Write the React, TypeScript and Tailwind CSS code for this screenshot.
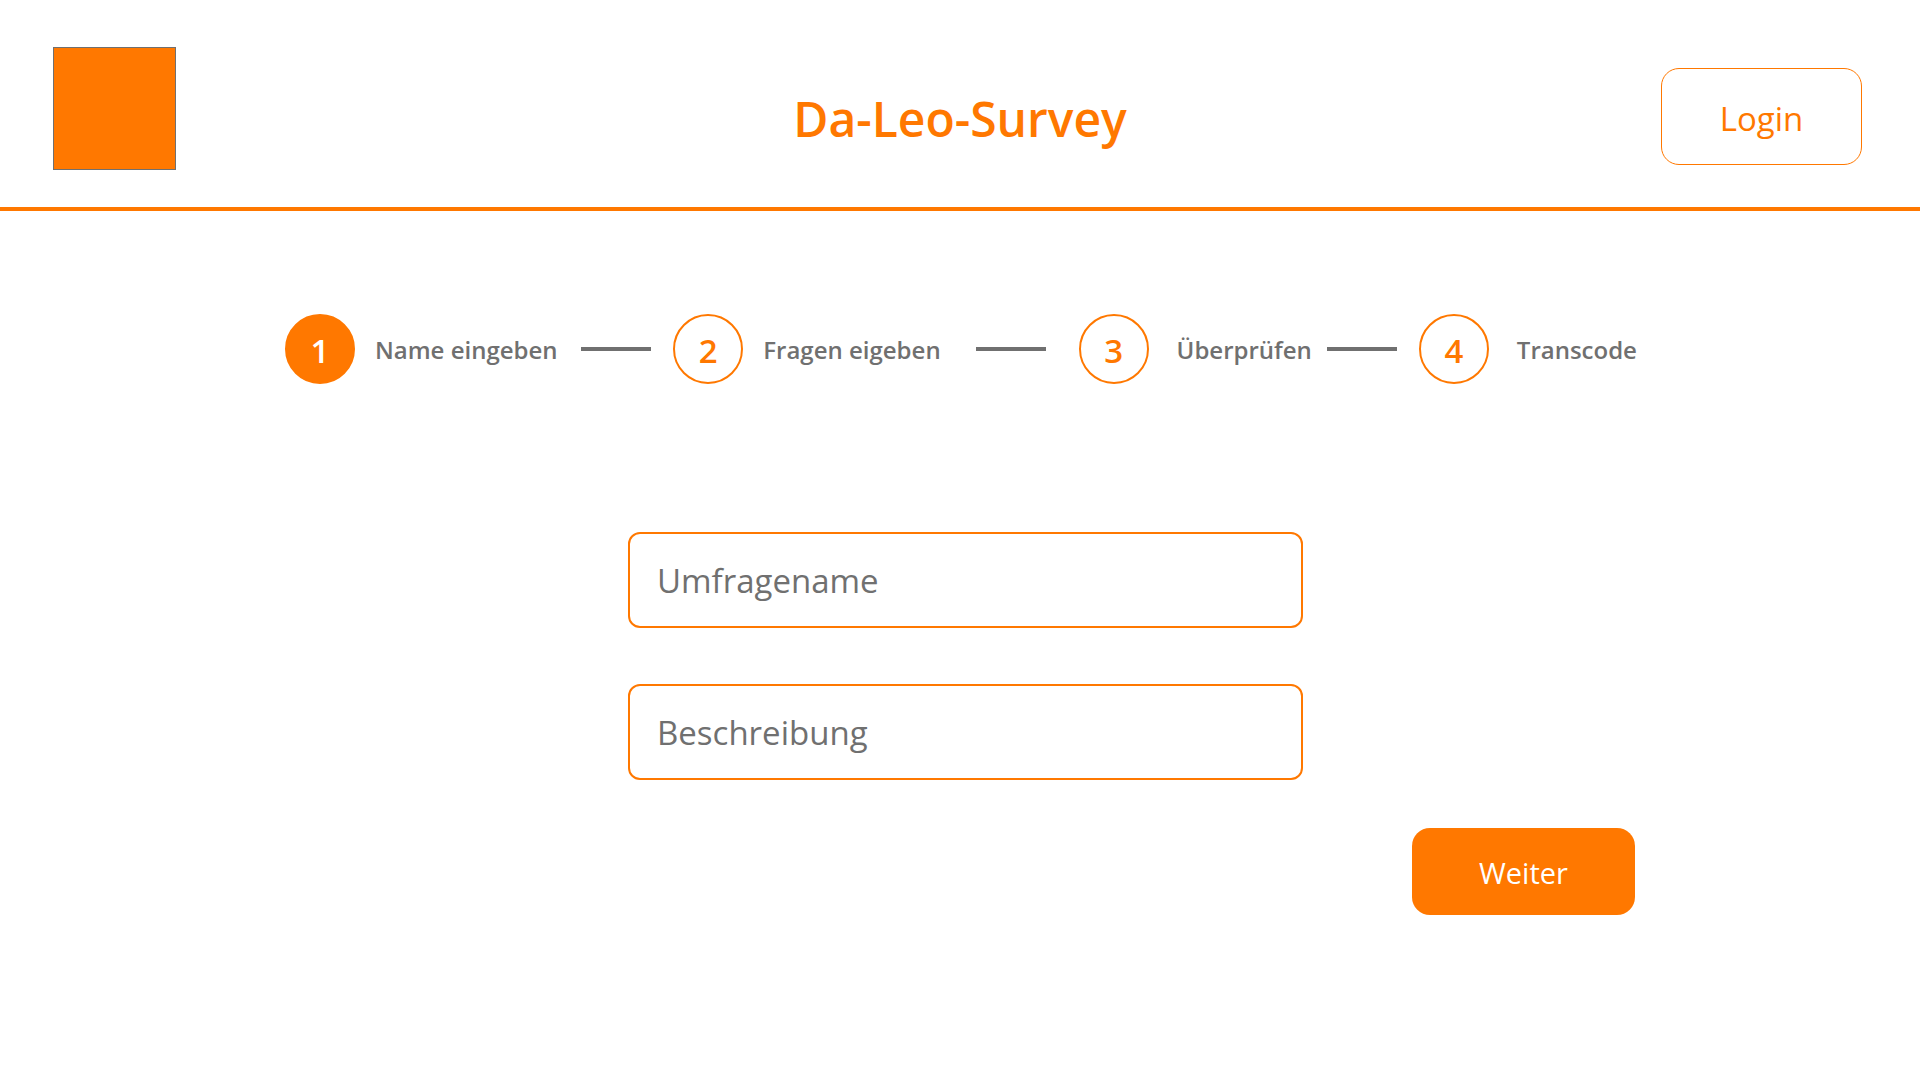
import { useState } from "react";

type Step = { label: string; gap: string; connector?: string };

const steps: Step[] = [
  { label: "Name eingeben", gap: "gap-5", connector: "mr-[22px]" },
  { label: "Fragen eigeben", gap: "gap-5", connector: "mr-[33px]" },
  { label: "Überprüfen", gap: "gap-7", connector: "mr-[22px]" },
  { label: "Transcode", gap: "gap-7" },
];

function Header() {
  return (
    <header className="grid grid-cols-[1fr_auto_1fr] items-center border-b-4 border-[#ff7800] px-[53px] pt-[47px] pb-[37px] text-[#ff7800]">
      <div className="size-[123px] border border-[#707070] bg-[#ff7800]" />
      <h1 className="mt-5 text-[48px] leading-[60px] font-semibold">Da-Leo-Survey</h1>
      <button
        type="button"
        className="mt-4 mr-[5px] h-[97px] w-[201px] justify-self-end rounded-[18px] border border-[#ff7800] pt-1 text-[33px]"
      >
        Login
      </button>
    </header>
  );
}

function Stepper({ current }: { current: number }) {
  return (
    <ol className="grid grid-cols-[388fr_405fr_340fr_216fr]">
      {steps.map((step, i) => (
        <li
          key={step.label}
          aria-current={i === current ? "step" : undefined}
          className={`flex min-w-0 items-center whitespace-nowrap ${step.gap}`}
        >
          <span
            className={`flex size-[70px] shrink-0 items-center justify-center rounded-full border-2 border-[#ff7800] pt-1 text-[33px] leading-10 font-semibold ${
              i === current ? "bg-[#ff7800] text-white" : "text-[#ff7800]"
            }`}
          >
            {i + 1}
          </span>
          <span className="w-0 grow pt-0.5 text-[24px] leading-8 font-semibold text-[#707070]">
            {step.label}
          </span>
          {step.connector && (
            <span className={`h-1 w-[70px] shrink-0 bg-[#707070] ${step.connector}`} />
          )}
        </li>
      ))}
    </ol>
  );
}

function Field({
  label,
  value,
  onChange,
}: {
  label: string;
  value: string;
  onChange: (value: string) => void;
}) {
  return (
    <input
      type="text"
      aria-label={label}
      placeholder={label}
      value={value}
      onChange={(e) => onChange(e.target.value)}
      className="h-24 w-full rounded-xl border-2 border-[#ff7800] px-[27px] text-[33px] text-[#707070] placeholder:text-[#707070]"
    />
  );
}

export default function App() {
  const [name, setName] = useState("");
  const [description, setDescription] = useState("");

  return (
    <div className="min-h-screen bg-white font-['Open_Sans',sans-serif]">
      <Header />
      <main className="mx-auto max-w-[1350px] pt-[103px]">
        <Stepper current={0} />
        <form className="mt-[148px] flex flex-col" onSubmit={(e) => e.preventDefault()}>
          <div className="ml-[343px] flex max-w-[675px] flex-col gap-14">
            <Field label="Umfragename" value={name} onChange={setName} />
            <Field label="Beschreibung" value={description} onChange={setDescription} />
          </div>
          <button
            type="submit"
            className="mt-12 h-[87px] w-[223px] self-end rounded-[18px] bg-[#ff7800] pt-0.5 text-[29px] text-white"
          >
            Weiter
          </button>
        </form>
      </main>
    </div>
  );
}
